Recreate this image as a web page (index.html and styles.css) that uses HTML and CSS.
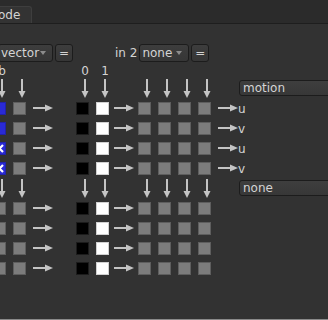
FILE: index.html
```html
<!DOCTYPE html>
<html lang="en">
<head>
    <meta charset="UTF-8">
    <meta name="viewport" content="width=device-width, initial-scale=1.0">
    <title>ShuffleCopy</title>
    <link rel="stylesheet" href="styles.css">
</head>
<body>
    <svg class="sprite" width="0" height="0">
        <symbol id="down" viewBox="0 0 8 19">
            <rect x="3" y="0" width="2" height="14" fill="#c4c4c4"/>
            <polygon points="0.5,12 7.5,12 4,19" fill="#c4c4c4"/>
        </symbol>
        <symbol id="right" viewBox="0 0 20 8">
            <rect x="0" y="3" width="14" height="2" fill="#c4c4c4"/>
            <polygon points="12,0.5 12,7.5 20,4" fill="#c4c4c4"/>
        </symbol>
        <symbol id="caret" viewBox="0 0 6 4">
            <polygon points="0,0 6,0 3,4" fill="#8c8c8c"/>
        </symbol>
    </svg>

    <div class="tabbar">
        <div class="tab">Node</div>
    </div>

    <div class="controls">
        <div class="dropdown wide"><span>vector</span><svg class="caret"><use href="#caret"/></svg></div>
        <div class="eq">=</div>
        <span class="in-label">in 2</span>
        <div class="dropdown"><span>none</span><svg class="caret"><use href="#caret"/></svg></div>
        <div class="eq">=</div>
    </div>

    <div class="matrix">
        <div class="row labels">
            <span class="cell sq">b</span><span class="cell sq"></span><span class="cell gap-a"></span>
            <span class="cell sq">0</span><span class="cell sq">1</span>
        </div>

        <div class="row arrows">
            <span class="cell sq"><svg class="down"><use href="#down"/></svg></span>
            <span class="cell sq"><svg class="down"><use href="#down"/></svg></span>
            <span class="cell gap-a"></span>
            <span class="cell sq"><svg class="down"><use href="#down"/></svg></span>
            <span class="cell sq"><svg class="down"><use href="#down"/></svg></span>
            <span class="cell gap-b"></span>
            <span class="cell sq"><svg class="down"><use href="#down"/></svg></span>
            <span class="cell sq"><svg class="down"><use href="#down"/></svg></span>
            <span class="cell sq"><svg class="down"><use href="#down"/></svg></span>
            <span class="cell sq"><svg class="down"><use href="#down"/></svg></span>
            <span class="cell gap-c"></span>
            <span class="cell lbl"><div class="select">motion</div></span>
        </div>

        <div class="row">
            <span class="cell sq"><i class="box blue"></i></span>
            <span class="cell sq"><i class="box"></i></span>
            <span class="cell gap-a"><svg class="right"><use href="#right"/></svg></span>
            <span class="cell sq"><i class="box black"></i></span>
            <span class="cell sq"><i class="box white"></i></span>
            <span class="cell gap-b"><svg class="right"><use href="#right"/></svg></span>
            <span class="cell sq"><i class="box"></i></span>
            <span class="cell sq"><i class="box"></i></span>
            <span class="cell sq"><i class="box"></i></span>
            <span class="cell sq"><i class="box"></i></span>
            <span class="cell gap-c"><svg class="right"><use href="#right"/></svg></span>
            <span class="cell lbl">u</span>
        </div>
        <div class="row">
            <span class="cell sq"><i class="box blue"></i></span>
            <span class="cell sq"><i class="box"></i></span>
            <span class="cell gap-a"><svg class="right"><use href="#right"/></svg></span>
            <span class="cell sq"><i class="box black"></i></span>
            <span class="cell sq"><i class="box white"></i></span>
            <span class="cell gap-b"><svg class="right"><use href="#right"/></svg></span>
            <span class="cell sq"><i class="box"></i></span>
            <span class="cell sq"><i class="box"></i></span>
            <span class="cell sq"><i class="box"></i></span>
            <span class="cell sq"><i class="box"></i></span>
            <span class="cell gap-c"><svg class="right"><use href="#right"/></svg></span>
            <span class="cell lbl">v</span>
        </div>
        <div class="row">
            <span class="cell sq"><i class="box blue"><svg class="cross" viewBox="0 0 13 13"><path d="M3 3 L10 10 M10 3 L3 10" stroke="#fff" stroke-width="2.2"/></svg></i></span>
            <span class="cell sq"><i class="box"></i></span>
            <span class="cell gap-a"><svg class="right"><use href="#right"/></svg></span>
            <span class="cell sq"><i class="box black"></i></span>
            <span class="cell sq"><i class="box white"></i></span>
            <span class="cell gap-b"><svg class="right"><use href="#right"/></svg></span>
            <span class="cell sq"><i class="box"></i></span>
            <span class="cell sq"><i class="box"></i></span>
            <span class="cell sq"><i class="box"></i></span>
            <span class="cell sq"><i class="box"></i></span>
            <span class="cell gap-c"><svg class="right"><use href="#right"/></svg></span>
            <span class="cell lbl">u</span>
        </div>
        <div class="row">
            <span class="cell sq"><i class="box blue"><svg class="cross" viewBox="0 0 13 13"><path d="M3 3 L10 10 M10 3 L3 10" stroke="#fff" stroke-width="2.2"/></svg></i></span>
            <span class="cell sq"><i class="box"></i></span>
            <span class="cell gap-a"><svg class="right"><use href="#right"/></svg></span>
            <span class="cell sq"><i class="box black"></i></span>
            <span class="cell sq"><i class="box white"></i></span>
            <span class="cell gap-b"><svg class="right"><use href="#right"/></svg></span>
            <span class="cell sq"><i class="box"></i></span>
            <span class="cell sq"><i class="box"></i></span>
            <span class="cell sq"><i class="box"></i></span>
            <span class="cell sq"><i class="box"></i></span>
            <span class="cell gap-c"><svg class="right"><use href="#right"/></svg></span>
            <span class="cell lbl">v</span>
        </div>

        <div class="row arrows">
            <span class="cell sq"><svg class="down"><use href="#down"/></svg></span>
            <span class="cell sq"><svg class="down"><use href="#down"/></svg></span>
            <span class="cell gap-a"></span>
            <span class="cell sq"><svg class="down"><use href="#down"/></svg></span>
            <span class="cell sq"><svg class="down"><use href="#down"/></svg></span>
            <span class="cell gap-b"></span>
            <span class="cell sq"><svg class="down"><use href="#down"/></svg></span>
            <span class="cell sq"><svg class="down"><use href="#down"/></svg></span>
            <span class="cell sq"><svg class="down"><use href="#down"/></svg></span>
            <span class="cell sq"><svg class="down"><use href="#down"/></svg></span>
            <span class="cell gap-c"></span>
            <span class="cell lbl"><div class="select">none</div></span>
        </div>

        <div class="row">
            <span class="cell sq"><i class="box"></i></span>
            <span class="cell sq"><i class="box"></i></span>
            <span class="cell gap-a"><svg class="right"><use href="#right"/></svg></span>
            <span class="cell sq"><i class="box black"></i></span>
            <span class="cell sq"><i class="box white"></i></span>
            <span class="cell gap-b"><svg class="right"><use href="#right"/></svg></span>
            <span class="cell sq"><i class="box"></i></span>
            <span class="cell sq"><i class="box"></i></span>
            <span class="cell sq"><i class="box"></i></span>
            <span class="cell sq"><i class="box"></i></span>
        </div>
        <div class="row">
            <span class="cell sq"><i class="box"></i></span>
            <span class="cell sq"><i class="box"></i></span>
            <span class="cell gap-a"><svg class="right"><use href="#right"/></svg></span>
            <span class="cell sq"><i class="box black"></i></span>
            <span class="cell sq"><i class="box white"></i></span>
            <span class="cell gap-b"><svg class="right"><use href="#right"/></svg></span>
            <span class="cell sq"><i class="box"></i></span>
            <span class="cell sq"><i class="box"></i></span>
            <span class="cell sq"><i class="box"></i></span>
            <span class="cell sq"><i class="box"></i></span>
        </div>
        <div class="row">
            <span class="cell sq"><i class="box"></i></span>
            <span class="cell sq"><i class="box"></i></span>
            <span class="cell gap-a"><svg class="right"><use href="#right"/></svg></span>
            <span class="cell sq"><i class="box black"></i></span>
            <span class="cell sq"><i class="box white"></i></span>
            <span class="cell gap-b"><svg class="right"><use href="#right"/></svg></span>
            <span class="cell sq"><i class="box"></i></span>
            <span class="cell sq"><i class="box"></i></span>
            <span class="cell sq"><i class="box"></i></span>
            <span class="cell sq"><i class="box"></i></span>
        </div>
        <div class="row">
            <span class="cell sq"><i class="box"></i></span>
            <span class="cell sq"><i class="box"></i></span>
            <span class="cell gap-a"><svg class="right"><use href="#right"/></svg></span>
            <span class="cell sq"><i class="box black"></i></span>
            <span class="cell sq"><i class="box white"></i></span>
            <span class="cell gap-b"><svg class="right"><use href="#right"/></svg></span>
            <span class="cell sq"><i class="box"></i></span>
            <span class="cell sq"><i class="box"></i></span>
            <span class="cell sq"><i class="box"></i></span>
            <span class="cell sq"><i class="box"></i></span>
        </div>
    </div>

    <div class="statusline"></div>
</body>
</html>
```

FILE: styles.css
```css
html, body {
    height: 100%;
}
body {
    font-family: "DejaVu Sans", sans-serif;
    font-size: 12px;
    background-color: #323232;
    color: #d4d4d4;
    margin: 0;
    padding: 0;
    display: flex;
    flex-direction: column;
    overflow: hidden;
}
.sprite {
    position: absolute;
    width: 0;
    height: 0;
}
.tabbar {
    height: 23px;
    background-color: #2b2b2b;
    border-bottom: 1px solid #1e1e1e;
    display: flex;
    align-items: flex-end;
    flex-shrink: 0;
}
.tab {
    margin-left: -18px;
    width: 50px;
    height: 17px;
    box-sizing: border-box;
    padding-left: 6px;
    line-height: 16px;
    background-color: #333333;
    border: 1px solid #3e3e3e;
    border-bottom: none;
    border-radius: 0 3px 0 0;
}
.controls {
    display: flex;
    align-items: center;
    height: 18px;
    margin: 20px 0 0 -2px;
    flex-shrink: 0;
}
.dropdown {
    display: flex;
    align-items: center;
    width: 50px;
    height: 18px;
    box-sizing: border-box;
    padding: 0 6px 0 2px;
    background: linear-gradient(#3d3d3d, #363636);
    border: 1px solid #1c1c1c;
    border-radius: 3px;
}
.dropdown.wide {
    width: 55px;
}
.dropdown .caret {
    width: 6px;
    height: 4px;
    margin-left: auto;
}
.eq {
    width: 18px;
    height: 18px;
    box-sizing: border-box;
    margin-left: 2px;
    text-align: center;
    line-height: 16px;
    background: linear-gradient(#3d3d3d, #363636);
    border: 1px solid #1c1c1c;
    border-radius: 3px;
}
.controls .dropdown + .eq {
    margin-left: 2px;
}
.in-label {
    margin: 0 2px 0 42px;
}
.matrix {
    margin-left: -10px;
    flex-shrink: 0;
}
.row {
    display: flex;
    height: 20px;
}
.row.labels {
    height: 16px;
    line-height: 16px;
    padding-top: 1px;
}
.cell {
    flex-shrink: 0;
}
.cell.sq {
    width: 20px;
}
.labels .cell.sq {
    box-sizing: border-box;
    padding-left: 4px;
    text-align: center;
}
.cell.gap-a {
    width: 43px;
}
.cell.gap-b {
    width: 22px;
}
.cell.gap-c {
    width: 23px;
}
.cell.lbl {
    line-height: 20px;
}
.box {
    display: block;
    position: relative;
    width: 13px;
    height: 13px;
    margin: 3px 0 0 3px;
    box-sizing: border-box;
    background-color: #7c7c7c;
    border: 1px solid #5e5e5e;
}
.box.blue {
    background-color: #2a2ad6;
    border-color: #2222a8;
}
.box.black {
    background-color: #000000;
    border-color: #1c1c1c;
}
.box.white {
    background-color: #ffffff;
    border-color: #d0d0d0;
}
.box .cross {
    display: block;
    width: 13px;
    height: 13px;
    margin: -1px;
}
.down {
    display: block;
    width: 8px;
    height: 19px;
    margin-left: 8px;
}
.gap-a .right {
    margin-left: 3px;
}
.gap-b .right {
    margin-left: 1px;
}
.gap-c .right {
    margin-left: 3px;
}
.right {
    display: block;
    width: 20px;
    height: 8px;
    margin-top: 5px;
}
.select {
    width: 110px;
    height: 16px;
    margin: 1px 0 0 1px;
    box-sizing: border-box;
    padding-left: 3px;
    line-height: 14px;
    background: linear-gradient(#3e3e3e, #373737);
    border: 1px solid #1c1c1c;
    border-radius: 3px;
}
.statusline {
    margin-top: auto;
    height: 1px;
    background-color: #8a8a8a;
    flex-shrink: 0;
}
```
